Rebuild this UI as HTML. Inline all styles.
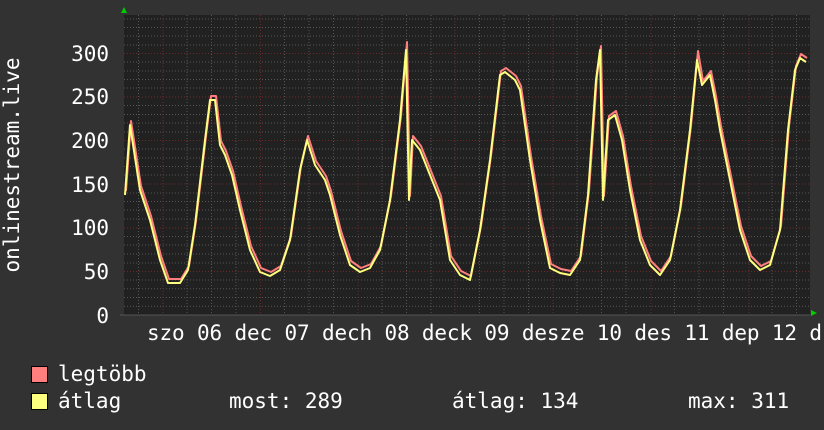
<!DOCTYPE html>
<html><head><meta charset="utf-8"><style>
html,body{margin:0;padding:0;background:#323232;}
svg{display:block}
text{font-family:"DejaVu Sans Mono","Liberation Mono",monospace;fill:#fff;font-size:21px}
</style></head><body>
<svg width="824" height="430" viewBox="0 0 824 430" xmlns="http://www.w3.org/2000/svg">
<rect width="824" height="430" fill="#323232"/>
<rect x="124" y="15" width="686" height="300" fill="#212121"/>
<g stroke="#555" stroke-width="1" stroke-dasharray="1,2">
<path d="M124 306.3H810M124 297.5H810M124 288.8H810M124 280H810M124 263H810M124 254H810M124 245H810M124 236.5H810M124 219H810M124 210H810M124 201.5H810M124 193H810M124 175H810M124 166.5H810M124 158H810M124 149H810M124 132H810M124 123H810M124 114.5H810M124 105.5H810M124 88H810M124 79.5H810M124 71H810M124 62H810M124 45H810M124 36H810M124 27.5H810M124 19H810"/>
<path d="M138.5 15V315M187 15V315M211.5 15V315M236 15V315M284.5 15V315M309 15V315M333.5 15V315M382 15V315M406.5 15V315M431 15V315M479.5 15V315M504 15V315M528.5 15V315M577 15V315M601.5 15V315M626 15V315M674.5 15V315M699 15V315M723.5 15V315M772 15V315M796.5 15V315"/>
</g>
<g stroke="#6b2a2a" stroke-width="1" stroke-dasharray="1,2">
<path d="M124 271.5H810M124 228H810M124 184H810M124 140.5H810M124 97H810M124 53.5H810"/>
<path d="M163 15V315M260.5 15V315M358 15V315M455 15V315M553 15V315M651 15V315M749 15V315"/>
</g>
<path d="M120 315H810" stroke="#555" stroke-width="1"/>
<polygon points="121,13 127,13 124,7" fill="#0c0"/>
<polygon points="811,310 811,316 817,313" fill="#0c0"/>
<g fill="none" stroke-width="2" stroke-linejoin="round">
<polyline id="d" stroke="#ff7f7f" transform="translate(1,-4)" points="125,195 130,125 140,190 150,220 160,260 168,283 180,283 188,270 195,225 205,140 210,100 215,100 220,145 225,155 232,175 240,210 250,250 260,272 270,276 280,270 290,240 300,170 307,140 315,165 325,180 330,195 340,235 350,265 360,272 370,268 380,250 390,200 400,120 406,46 409,200 412,140 420,150 430,175 440,200 450,260 460,275 470,280 480,230 490,160 500,75 505,72 515,80 520,90 530,160 540,220 550,268 560,273 570,275 580,260 588,195 596,80 600,50 603,200 608,120 615,115 622,140 630,190 640,240 650,265 660,275 670,260 680,210 690,130 697,55 702,85 710,75 715,100 720,130 730,180 740,230 750,260 760,270 770,265 780,230 788,130 795,70 800,58 806,62"/>
<polyline stroke="#ffff7f" points="125,195 130,125 140,190 150,220 160,260 168,283 180,283 188,270 195,225 205,140 210,100 215,100 220,145 225,155 232,175 240,210 250,250 260,272 270,276 280,270 290,240 300,170 307,140 315,165 325,180 330,195 340,235 350,265 360,272 370,268 380,250 390,200 400,120 406,50 409,200 412,140 420,150 430,175 440,200 450,260 460,275 470,280 480,230 490,160 500,75 505,72 515,80 520,90 530,160 540,220 550,268 560,273 570,275 580,260 588,195 596,80 600,50 603,200 608,120 615,115 622,140 630,190 640,240 650,265 660,275 670,260 680,210 690,130 697,60 702,85 710,75 715,100 720,130 730,180 740,230 750,260 760,270 770,265 780,230 788,130 795,70 800,58 806,62"/>
</g>
<g text-anchor="end">
<text x="109" y="61">300</text>
<text x="109" y="148">200</text>
<text x="109" y="104">250</text>
<text x="109" y="192">150</text>
<text x="109" y="235">100</text>
<text x="109" y="279">50</text>
<text x="109" y="323">0</text>
</g>
<text transform="translate(19,165) rotate(-90)" text-anchor="middle">onlinestream.live</text>
<text x="147" y="340" textLength="675" lengthAdjust="spacing">szo 06 dec 07 dech 08 deck 09 desze 10 des 11 dep 12 d</text>
<rect x="31.5" y="366.5" width="16" height="16" fill="#ff7f7f" stroke="#000"/>
<rect x="31.5" y="393.5" width="16" height="16" fill="#ffff7f" stroke="#000"/>
<text x="58" y="381">legtöbb</text>
<text x="58" y="408">átlag</text>
<text x="229" y="408">most: 289</text>
<text x="452" y="408">átlag: 134</text>
<text x="688" y="408">max: 311</text>
</svg>
</body></html>
